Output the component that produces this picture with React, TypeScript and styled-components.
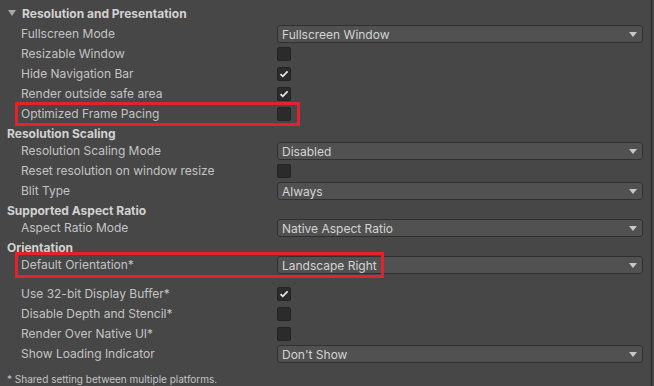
import React from "react";
import styled, { createGlobalStyle } from "styled-components";

const GlobalStyle = createGlobalStyle`
  html, body { margin: 0; padding: 0; background: #474747; }
  body { font-family: Inter, "Noto Sans", sans-serif; }
  * { box-sizing: border-box; }
`;

const Page = styled.div`
  width: 654px;
  height: 386px;
  background: #474747;
  overflow: hidden;
`;

const Panel = styled.div`
  width: 652px;
  height: 386px;
  border-right: 1px solid #2c2c2c;
  padding-top: 3px;
  display: flex;
  flex-direction: column;
`;

const Foldout = styled.div`
  height: 20px;
  display: flex;
  align-items: center;
  padding-left: 8px;
  gap: 6px;
  font-size: 12px;
  font-weight: 700;
  color: #d2d2d2;
`;

const SubHeader = styled.div`
  height: 16px;
  margin-top: 2px;
  margin-bottom: -1px;
  display: flex;
  align-items: center;
  padding-left: 7px;
  font-size: 12px;
  font-weight: 700;
  color: #d2d2d2;
`;

const Row = styled.div<{ $space?: number }>`
  position: relative;
  height: 18px;
  margin-top: ${(p) => 2 + (p.$space ?? 0)}px;
  display: flex;
  align-items: center;
`;

const Label = styled.div`
  width: 277px;
  padding-left: 21px;
  font-size: 12px;
  color: #c4c4c4;
  white-space: nowrap;
  line-height: 18px;
`;

const Dropdown = styled.div`
  width: 366px;
  height: 18px;
  border: 1px solid #303030;
  border-radius: 3px;
  background: #515151;
  display: flex;
  align-items: center;
  justify-content: space-between;
  padding: 0 5px 0 4px;
  font-size: 12px;
  color: #d4d4d4;
`;

const Box = styled.div`
  width: 14px;
  height: 14px;
  border: 1px solid #232323;
  border-radius: 2px;
  background: #2b2b2b;
  display: flex;
  align-items: center;
  justify-content: center;
`;

const Highlight = styled.div<{ $top: number; $width: number; $height: number }>`
  position: absolute;
  left: 15px;
  top: ${(p) => p.$top}px;
  width: ${(p) => p.$width}px;
  height: ${(p) => p.$height}px;
  border: 3px solid #e3222b;
  pointer-events: none;
`;

const Footnote = styled.div`
  height: 14px;
  margin-top: 9px;
  padding-left: 7px;
  display: flex;
  align-items: center;
  font-size: 10px;
  color: #c4c4c4;
  white-space: nowrap;
`;

const Arrow = () => (
  <svg width="8" height="5" viewBox="0 0 8 5">
    <path d="M0 0 L8 0 L4 5 Z" fill="#c8c8c8" />
  </svg>
);

const FoldTriangle = () => (
  <svg width="8" height="6" viewBox="0 0 8 6">
    <path d="M0 0 L8 0 L4 6 Z" fill="#a8a8a8" />
  </svg>
);

const Check = ({ on }: { on?: boolean }) => (
  <Box>
    {on && (
      <svg width="10" height="8" viewBox="0 0 10 8">
        <path d="M1.5 4.2 L3.8 6.4 L8.6 1.4" fill="none" stroke="#e8e8e8" strokeWidth="1.7" />
      </svg>
    )}
  </Box>
);

const Select = ({ value }: { value: string }) => (
  <Dropdown>
    <span>{value}</span>
    <Arrow />
  </Dropdown>
);

export default function App() {
  return (
    <Page>
      <GlobalStyle />
      <Panel>
        <Foldout>
          <FoldTriangle />
          <span>Resolution and Presentation</span>
        </Foldout>
        <Row>
          <Label>Fullscreen Mode</Label>
          <Select value="Fullscreen Window" />
        </Row>
        <Row>
          <Label>Resizable Window</Label>
          <Check />
        </Row>
        <Row>
          <Label>Hide Navigation Bar</Label>
          <Check on />
        </Row>
        <Row>
          <Label>Render outside safe area</Label>
          <Check on />
        </Row>
        <Row>
          <Label>Optimized Frame Pacing</Label>
          <Check />
          <Highlight $top={-3} $width={285} $height={24} />
        </Row>
        <SubHeader>Resolution Scaling</SubHeader>
        <Row>
          <Label>Resolution Scaling Mode</Label>
          <Select value="Disabled" />
        </Row>
        <Row>
          <Label>Reset resolution on window resize</Label>
          <Check />
        </Row>
        <Row>
          <Label>Blit Type</Label>
          <Select value="Always" />
        </Row>
        <SubHeader>Supported Aspect Ratio</SubHeader>
        <Row>
          <Label>Aspect Ratio Mode</Label>
          <Select value="Native Aspect Ratio" />
        </Row>
        <SubHeader>Orientation</SubHeader>
        <Row>
          <Label>Default Orientation*</Label>
          <Select value="Landscape Right" />
          <Highlight $top={-4} $width={369} $height={26} />
        </Row>
        <Row $space={9}>
          <Label>Use 32-bit Display Buffer*</Label>
          <Check on />
        </Row>
        <Row>
          <Label>Disable Depth and Stencil*</Label>
          <Check />
        </Row>
        <Row>
          <Label>Render Over Native UI*</Label>
          <Check />
        </Row>
        <Row>
          <Label>Show Loading Indicator</Label>
          <Select value="Don't Show" />
        </Row>
        <Footnote>* Shared setting between multiple platforms.</Footnote>
      </Panel>
    </Page>
  );
}
